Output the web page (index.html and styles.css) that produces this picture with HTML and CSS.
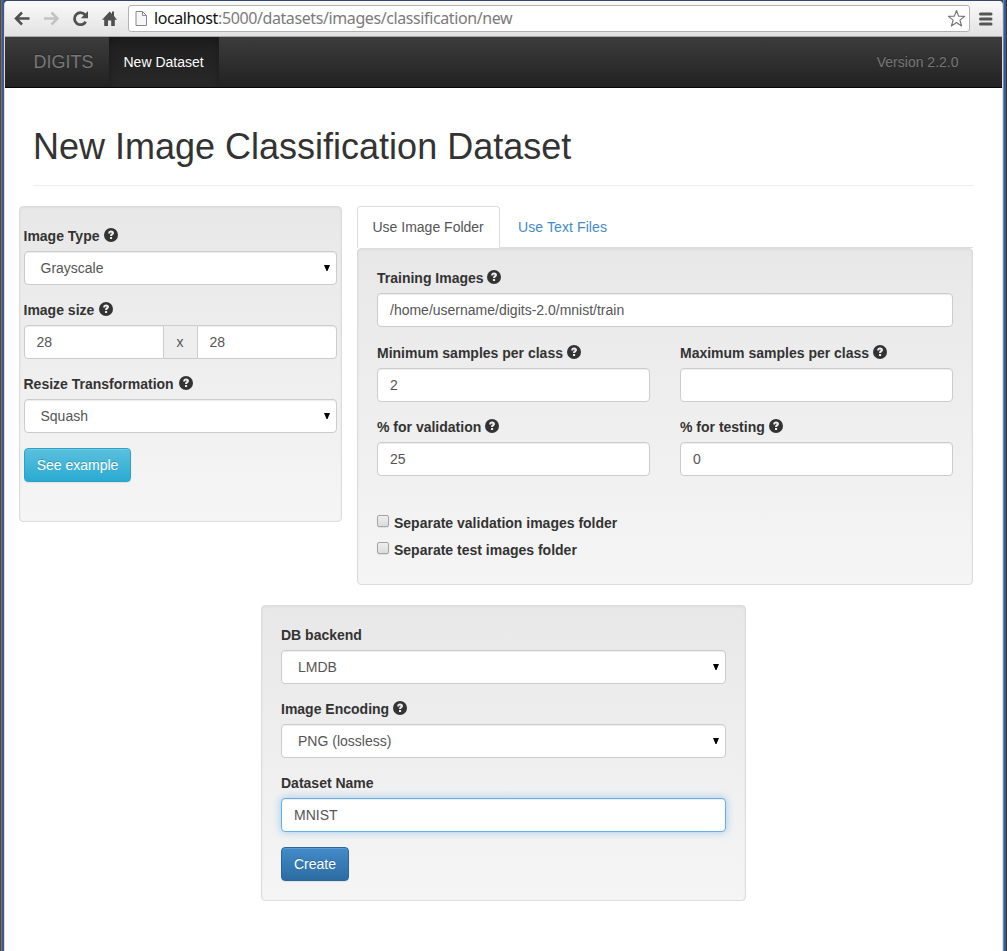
FILE: index.html
```html
<!DOCTYPE html>
<html lang="en">
<head>
<meta charset="utf-8">
<title>New Image Classification Dataset</title>
<link rel="stylesheet" href="styles.css">
</head>
<body>
<svg class="defs" aria-hidden="true">
  <symbol id="help" viewBox="0 0 14 14">
    <circle cx="7" cy="7" r="7" fill="#333"/>
    <path d="M4.200 5.400C4.200 3.500 5.300 2.600 7.100 2.600s2.900.9 2.900 2.400c0 1.900-1.900 1.800-1.900 3.100H6c0-2.100 1.700-2.100 1.700-3 0-.5-.2-.7-.7-.7-.6 0-.8.3-.8 1zM6 9h2.100v2H6z" fill="#eee"/>
  </symbol>
</svg>
<div class="window">
  <header class="toolbar">
    <svg class="tools" width="110" height="34" viewBox="0 0 110 34">
      <g fill="none" stroke="#505050" stroke-width="2.500">
        <path d="M25.500 16.500H12.500M18 10.500l-6 6 6 6"/>
        <path stroke="#c2c2c2" d="M40 16.500h13M47.500 10.500l6 6-6 6"/>
        <path stroke-width="2.800" d="M81 12.700a6 6 0 1 0 .7 7"/>
      </g>
      <path fill="#505050" d="M84 9v7.200h-7.200z"/>
      <path fill="#505050" d="M98 17.800l7.700-8.300 2.300 2.400V9.500h2v4.600l3 3.700h-2.200V24h-3.600v-5.500h-3.200V24h-3.800v-6.200z"/>
    </svg>
    <div class="address">
      <svg class="page-icon" width="13" height="15" viewBox="0 0 13 15"><path d="M1 .5h6.500l4 4v10H1zM7.500.5v4h4" fill="#f7f7f7" stroke="#888"/></svg>
      <span class="url"><b>localhost</b>:5000/datasets/images/classification/new</span>
      <svg class="star" width="19" height="19" viewBox="0 0 19 19"><path d="M9.500 1.500l2.100 5.600 6 .3-4.700 3.700 1.700 5.900-5.100-3.400L4.400 17l1.700-5.900L1.400 7.400l6-.3z" fill="#fff" stroke="#777" stroke-width="1.200" stroke-linejoin="round"/></svg>
    </div>
    <svg class="menu" width="14" height="14" viewBox="0 0 14 14"><path d="M1.500 2h10.500M1.500 7h10.500M1.500 12h10.500" stroke="#555" stroke-width="3" stroke-linecap="round"/></svg>
  </header>
  <nav class="navbar">
    <span class="brand">DIGITS</span>
    <span class="nav-active">New Dataset</span>
    <span class="version">Version 2.2.0</span>
  </nav>
  <main class="container">
    <h1>New Image Classification Dataset</h1>
    <div class="columns">
      <section class="well image-options">
        <label>Image Type <svg class="help"><use href="#help"/></svg></label>
        <div class="control select">Grayscale<svg class="caret" viewBox="0 0 6 6"><path d="M0 0h6L3.500 6h-1z"/></svg></div>
        <label>Image size <svg class="help"><use href="#help"/></svg></label>
        <div class="size"><div class="control">28</div><span class="addon">x</span><div class="control">28</div></div>
        <label>Resize Transformation <svg class="help"><use href="#help"/></svg></label>
        <div class="control select">Squash<svg class="caret" viewBox="0 0 6 6"><path d="M0 0h6L3.500 6h-1z"/></svg></div>
        <button class="btn info">See example</button>
      </section>
      <section class="source">
        <div class="tabs"><span class="tab active">Use Image Folder</span><span class="tab">Use Text Files</span></div>
        <div class="well folder">
          <label>Training Images <svg class="help"><use href="#help"/></svg></label>
          <div class="control training">/home/username/digits-2.0/mnist/train</div>
          <div class="grid">
            <div><label>Minimum samples per class <svg class="help"><use href="#help"/></svg></label><div class="control">2</div></div>
            <div><label>Maximum samples per class <svg class="help"><use href="#help"/></svg></label><div class="control"></div></div>
            <div><label>% for validation <svg class="help"><use href="#help"/></svg></label><div class="control">25</div></div>
            <div><label>% for testing <svg class="help"><use href="#help"/></svg></label><div class="control">0</div></div>
          </div>
          <div class="checks">
            <label class="check"><i class="box"></i>Separate validation images folder</label>
            <label class="check"><i class="box"></i>Separate test images folder</label>
          </div>
        </div>
      </section>
    </div>
    <section class="well database">
      <label>DB backend</label>
      <div class="control select">LMDB<svg class="caret" viewBox="0 0 6 6"><path d="M0 0h6L3.500 6h-1z"/></svg></div>
      <label>Image Encoding <svg class="help"><use href="#help"/></svg></label>
      <div class="control select">PNG (lossless)<svg class="caret" viewBox="0 0 6 6"><path d="M0 0h6L3.500 6h-1z"/></svg></div>
      <label>Dataset Name</label>
      <div class="control focused">MNIST</div>
      <button class="btn primary">Create</button>
    </section>
  </main>
</div>
</body>
</html>
```

FILE: styles.css
```css
* { box-sizing: border-box; }
body {
  margin: 0;
  height: 951px;
  overflow: hidden;
  padding: 1px 4px 0 4px;
  background: linear-gradient(90deg, #4b4b4b 0 1px, #6b7078 1px 2px, #3f5a8a 2px 4px, #34466f 4px 1003px, #7086ab 1003px 1004px, #3f5a8a 1004px 1006px, #333 1006px);
  font: 14px/20px "Liberation Sans", Arial, sans-serif;
  color: #333;
}
.defs { display: none; }
.window {
  height: 950px;
  background: #fff;
  border-left: 1px solid #dcdcdc;
  border-right: 1px solid #dcdcdc;
  border-radius: 4px 4px 0 0;
  overflow: hidden;
}
.toolbar {
  height: 36px;
  display: flex;
  align-items: center;
  background: linear-gradient(#fafafa, #e2e2e2);
  border-bottom: 1px solid #aaa;
}
.tools { width: 110px; margin: 0 14px 0 -1px; flex: none; overflow: visible; }
.address {
  width: 842px;
  height: 27px;
  display: flex;
  align-items: center;
  padding: 0 3px 0 6px;
  background: #fff;
  border: 1px solid #b5b1b1;
  border-radius: 3px;
}
.url {
  margin: -2px 0 0 6px;
  flex: 1;
  font: 16px/20px "Noto Sans", sans-serif;
  letter-spacing: -0.4px;
  color: #7b7b7b;
  white-space: nowrap;
}
.url b { font-weight: 400; color: #111; }
.menu { margin-left: 9px; }
.navbar {
  height: 51px;
  display: flex;
  padding-left: 14px;
  background: linear-gradient(#3c3c3c, #222);
  border-bottom: 1px solid #080808;
  line-height: 50px;
  color: #777;
  text-shadow: 0 -1px 0 rgba(0, 0, 0, .25);
}
.brand { width: 90px; padding-left: 14.5px; font-size: 18px; }
.nav-active {
  width: 110px;
  padding-left: 14.5px;
  color: #fff;
  background: linear-gradient(#1f1f1f, #282828);
  box-shadow: inset 0 3px 9px rgba(0, 0, 0, .25);
}
.version { margin-left: auto; padding-right: 43.5px; }
.container { padding: 38px 28px 0 14px; }
h1 {
  margin: 0 0 20px 14px;
  height: 60px;
  width: 941px;
  padding-top: 1px;
  border-bottom: 1px solid #eee;
  font-size: 36px;
  font-weight: 400;
  line-height: 40px;
}
.columns { display: flex; align-items: flex-start; gap: 15px; }
.well {
  background: linear-gradient(#e8e8e8, #f5f5f5);
  border: 1px solid #dcdcdc;
  border-radius: 4px;
  box-shadow: inset 0 1px 3px rgba(0, 0, 0, .05), 0 1px 0 rgba(255, 255, 255, .1);
  padding: 19px;
}
.image-options { width: 323px; height: 316px; padding: 19px 4px; }
.source { width: 616px; }
label { display: block; height: 20px; margin-bottom: 5px; font-weight: 700; white-space: nowrap; }
.image-options label { margin-left: -0.5px; }
.help { width: 14px; height: 14px; vertical-align: -1px; }
.image-options .help, .training-label .help { margin-left: 1px; }
.control {
  height: 34px;
  margin-bottom: 15px;
  padding: 6px 12px;
  background: #fff;
  border: 1px solid #ccc;
  border-radius: 4px;
  box-shadow: inset 0 1px 1px rgba(0, 0, 0, .075);
  color: #555;
}
.select { display: flex; align-items: center; justify-content: space-between; padding: 0 6px 0 16px; }
.image-options .select { padding-left: 15.5px; }
.caret { width: 6px; height: 6px; margin-top: -1px; }
.size { display: flex; margin-bottom: 15px; }
.size .control { margin: 0; padding-left: 11.5px; }
.size .control:first-child { width: 140px; border-radius: 4px 0 0 4px; }
.size .control:last-child { width: 140px; border-radius: 0 4px 4px 0; }
.addon {
  width: 33px;
  padding-right: 1px;
  line-height: 32px;
  text-align: center;
  color: #555;
  background: #eee;
  border: solid #ccc;
  border-width: 1px 0 1px 0;
}
.btn {
  height: 34px;
  display: block;
  padding: 6px 12px;
  border-radius: 4px;
  color: #fff;
  font: inherit;
  text-shadow: 0 -1px 0 rgba(0, 0, 0, .2);
  box-shadow: inset 0 1px 0 rgba(255, 255, 255, .15), 0 1px 1px rgba(0, 0, 0, .075);
}
.info { width: 107px; padding: 6px 11px; background: linear-gradient(#5bc0de, #2aabd2); border: 1px solid #28a4c9; }
.primary { width: 68px; background: linear-gradient(#428bca, #2d6ca2); border: 1px solid #2b669a; }
.tabs { height: 42px; display: flex; border-bottom: 1px solid #ddd; }
.tab {
  height: 42px;
  padding: 10px 15px;
  color: #428bca;
  border: 1px solid transparent;
  white-space: nowrap;
  letter-spacing: .1px;
}
.tab.active {
  width: 143px;
  margin-right: 2px;
  padding: 10px 0 10px 14.5px;
  color: #555;
  background: #fff;
  border-color: #ddd #ddd #fff;
  border-radius: 4px 4px 0 0;
  letter-spacing: 0;
}
.folder { height: 337px; }
.training { margin-bottom: 16px; }
.grid { display: grid; grid-template-columns: 273px 273px; column-gap: 30px; }
.checks { margin-top: 22px; }
.check { display: flex; margin-bottom: 7px; }
.box {
  width: 12px;
  height: 12px;
  margin: 2px 5px 0 0;
  border: 1px solid #a5a5a5;
  border-radius: 2px;
  background: linear-gradient(#eee, #dcdcdc);
  box-shadow: 0 1px 1px rgba(0, 0, 0, .08);
}
.database { width: 485px; height: 296px; margin: 20px 0 0 242px; }
.focused { border-color: #66afe9; box-shadow: inset 0 1px 1px rgba(0, 0, 0, .075), 0 0 8px rgba(102, 175, 233, .6); }
```
